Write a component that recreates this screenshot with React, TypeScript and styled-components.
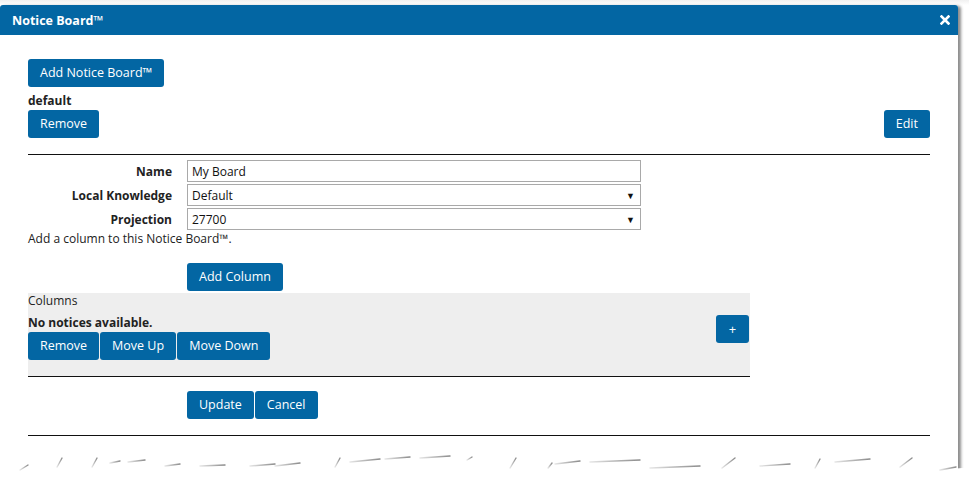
import React from "react";
import styled, { createGlobalStyle } from "styled-components";

const GlobalStyle = createGlobalStyle`
  html, body { margin: 0; padding: 0; background: #ffffff; }
  body { font-family: "Open Sans", "Liberation Sans", sans-serif; color: #222; }
`;

const Page = styled.div`
  width: 969px;
  height: 489px;
  overflow: hidden;
  padding-top: 5px;
  box-sizing: border-box;
  background: linear-gradient(#f0f0f0, #fff 5px);
  position: relative;
`;

const Dialog = styled.div`
  width: 958px;
  background: #fff;
  border-radius: 3px 3px 0 0;
  box-shadow: 3px 1px 3px rgba(0, 0, 0, 0.45);
  height: 500px;
`;

const Header = styled.div`
  height: 30px;
  background: #0366a3;
  border-radius: 3px 3px 0 0;
  display: flex;
  align-items: center;
  justify-content: space-between;
  padding: 0 8px 0 12px;
`;

const Title = styled.div`
  color: #fff;
  font-weight: 700;
  font-size: 12.5px;
`;

const Body = styled.div`
  padding: 24px 28px 0 28px;
  display: flex;
  flex-direction: column;
  align-items: flex-start;
`;

const Button = styled.button<{ $mt?: number }>`
  height: 28px;
  background: #0366a3;
  color: #fff;
  border: none;
  border-radius: 3px;
  padding: 0 12px;
  font-family: "Open Sans", "Liberation Sans", sans-serif;
  font-size: 12.5px;
  line-height: 28px;
  margin-top: ${(p) => p.$mt ?? 0}px;
  cursor: pointer;
`;

const ButtonGroup = styled.div<{ $mt?: number; $ml?: number }>`
  display: flex;
  gap: 1px;
  margin-top: ${(p) => p.$mt ?? 0}px;
  margin-left: ${(p) => p.$ml ?? 0}px;
`;

const BoldLabel = styled.div<{ $mt?: number }>`
  font-weight: 700;
  font-size: 12px;
  line-height: 16px;
  margin-top: ${(p) => p.$mt ?? 0}px;
`;

const SpreadRow = styled.div`
  align-self: stretch;
  display: flex;
  justify-content: space-between;
`;

const Rule = styled.hr<{ $mt: number }>`
  align-self: stretch;
  border: none;
  border-top: 1px solid #111;
  margin: ${(p) => p.$mt}px 0 0 0;
  height: 0;
`;

const Form = styled.div`
  display: grid;
  grid-template-columns: 144px 454px;
  column-gap: 15px;
  row-gap: 2px;
  margin-top: 5px;
  align-items: center;
`;

const Label = styled.label`
  text-align: right;
  font-weight: 700;
  font-size: 12px;
`;

const Field = styled.div`
  height: 22px;
  box-sizing: border-box;
  border: 1px solid #a9a9a9;
  display: flex;
  align-items: center;
  justify-content: space-between;
  padding: 0 5px 0 4px;
  font-size: 12px;
  color: #111;
`;

const Arrow = styled.span`
  font-size: 9px;
  color: #111;
`;

const Text = styled.div<{ $mt?: number }>`
  font-size: 12px;
  line-height: 16px;
  margin-top: ${(p) => p.$mt ?? 0}px;
`;

const Panel = styled.div`
  margin-top: 2px;
  width: 722px;
  height: 84px;
  box-sizing: border-box;
  background: #eeeeee;
  border-bottom: 1px solid #111;
  display: flex;
  justify-content: space-between;
  align-items: flex-start;
`;

const PanelLeft = styled.div`
  display: flex;
  flex-direction: column;
  align-items: flex-start;
`;

const PlusButton = styled(Button)`
  width: 33px;
  padding: 0;
  font-size: 13px;
  margin-top: 22px;
  margin-right: 1px;
`;

const Torn = styled.svg`
  position: absolute;
  left: 0;
  top: 445px;
  display: block;
`;

const segs = [
  [20, 470, 28, 465], [57, 467, 62, 458], [92, 467, 97, 458], [110, 463, 120, 461], [128, 462, 145, 460],
  [165, 466, 180, 464], [200, 466, 225, 465], [250, 466, 275, 464], [275, 466, 300, 463], [335, 467, 340, 458],
  [350, 462, 380, 459], [385, 459, 410, 457], [420, 458, 450, 456], [467, 460, 472, 457], [510, 468, 516, 458],
  [548, 468, 552, 463], [555, 464, 580, 461], [590, 462, 640, 460], [650, 468, 700, 466], [722, 468, 735, 458],
  [760, 466, 790, 464], [815, 468, 820, 459], [835, 462, 870, 459], [900, 467, 912, 458], [940, 470, 956, 467],
];

const tearLine =
  "M0 472 L20 470 L28 465 L57 467 L62 458 L92 467 L97 458 L120 461 L145 460 L165 466 L225 465 L300 463 L335 467 L340 458 L380 459 L450 456 L472 457 L510 468 L516 458 L552 463 L640 460 L700 466 L722 468 L735 458 L790 464 L815 468 L820 459 L870 459 L900 467 L912 458 L940 470 L962 468 L969 468 L969 480 L0 480 Z";

function CloseIcon() {
  return (
    <svg width="10" height="10" viewBox="0 0 10 10">
      <path d="M1.5 1.5 L8.5 8.5 M8.5 1.5 L1.5 8.5" stroke="#fff" strokeWidth="2.6" strokeLinecap="square" />
    </svg>
  );
}

export default function App() {
  return (
    <>
      <GlobalStyle />
      <Page>
        <Dialog>
          <Header>
            <Title>Notice Board™</Title>
            <CloseIcon />
          </Header>
          <Body>
            <Button>Add Notice Board™</Button>
            <BoldLabel $mt={6}>default</BoldLabel>
            <SpreadRow>
              <Button $mt={1}>Remove</Button>
              <Button $mt={1}>Edit</Button>
            </SpreadRow>
            <Rule $mt={16} />
            <Form>
              <Label>Name</Label>
              <Field>My Board</Field>
              <Label>Local Knowledge</Label>
              <Field>
                Default<Arrow>▼</Arrow>
              </Field>
              <Label>Projection</Label>
              <Field>
                27700<Arrow>▼</Arrow>
              </Field>
            </Form>
            <Text $mt={1}>Add a column to this Notice Board™.</Text>
            <ButtonGroup $mt={16} $ml={159}>
              <Button>Add Column</Button>
            </ButtonGroup>
            <Panel>
              <PanelLeft>
                <Text>Columns</Text>
                <BoldLabel $mt={6}>No notices available.</BoldLabel>
                <ButtonGroup $mt={1}>
                  <Button>Remove</Button>
                  <Button>Move Up</Button>
                  <Button>Move Down</Button>
                </ButtonGroup>
              </PanelLeft>
              <PlusButton>+</PlusButton>
            </Panel>
            <ButtonGroup $mt={14} $ml={159}>
              <Button>Update</Button>
              <Button>Cancel</Button>
            </ButtonGroup>
            <Rule $mt={16} />
          </Body>
        </Dialog>
        <Torn width="969" height="44" viewBox="0 445 969 44">
          <defs>
            <linearGradient id="g" x1="0" x2="1" y1="0" y2="0">
              <stop offset="0" stopColor="#e6e6e6" />
              <stop offset="1" stopColor="#8a8a8a" />
            </linearGradient>
          </defs>
          <path d={tearLine} fill="#fff" />
          <rect x="0" y="478" width="969" height="20" fill="#fff" />
          {segs.map(([x1, y1, x2, y2], i) => (
            <line key={i} x1={x1} y1={y1} x2={x2} y2={y2} stroke="url(#g)" strokeWidth={1.4} strokeLinecap="round" />
          ))}
        </Torn>
      </Page>
    </>
  );
}
